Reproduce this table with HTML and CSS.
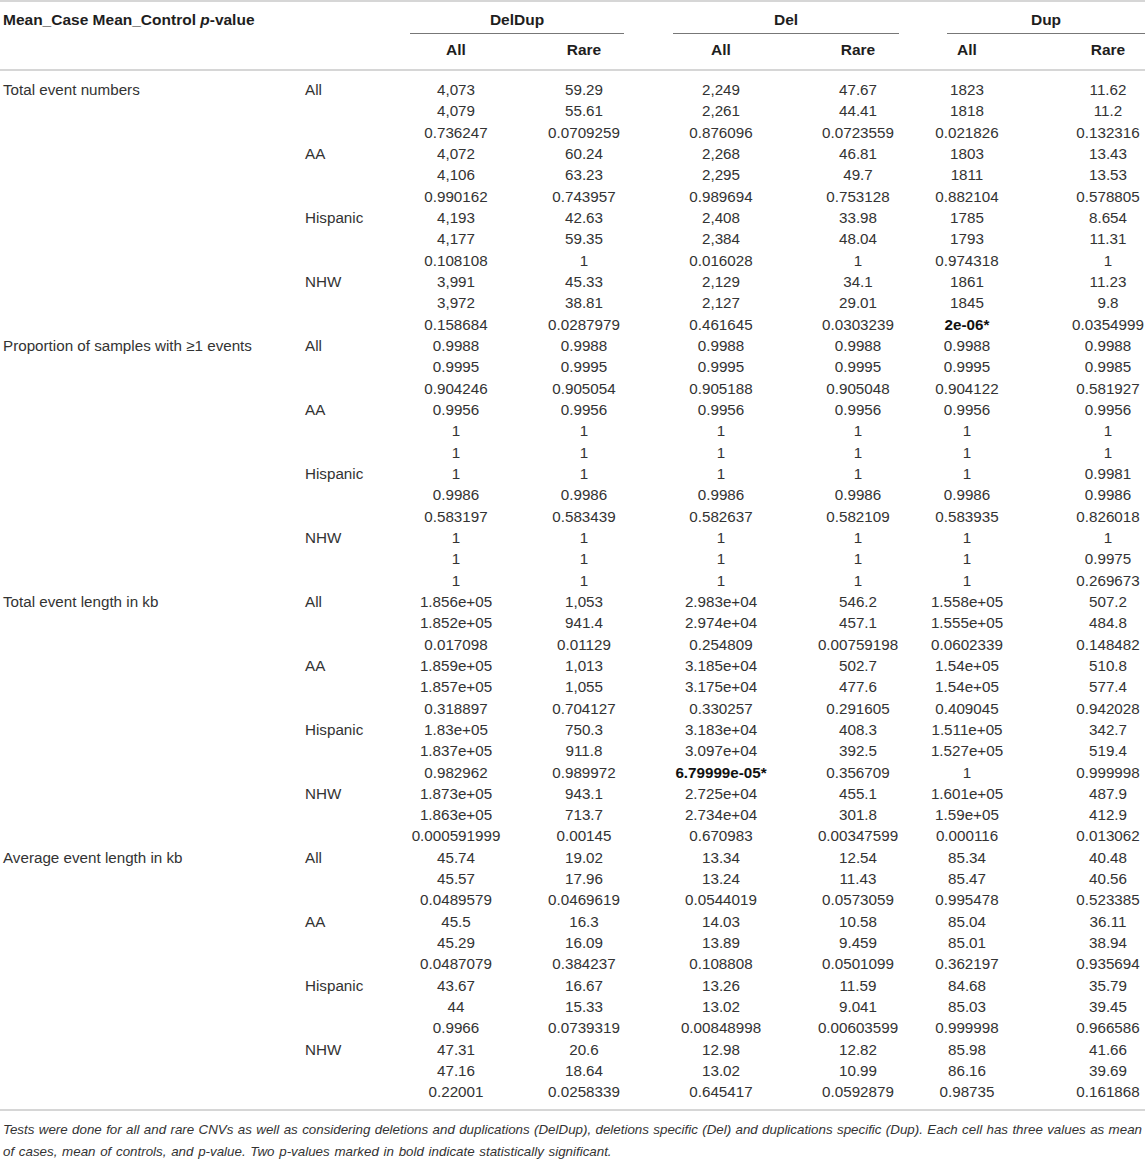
FILE: index.html
```html
<!DOCTYPE html>
<html lang="en">
<head>
  <meta charset="UTF-8" />
  <title>CNV burden table</title>
  <link rel="stylesheet" href="styles.css">
</head>
<body>
  <div class="wrap">
    <table class="cnv">
      <colgroup>
        <col class="c-label"><col class="c-pop">
        <col class="c-a"><col class="c-b"><col class="c-c"><col class="c-d"><col class="c-e"><col class="c-f">
      </colgroup>
      <thead>
        <tr class="top">
          <th colspan="2" rowspan="2" class="corner">Mean_Case Mean_Control <i>p</i>-value</th>
          <th colspan="2" class="grp g1"><div>DelDup</div></th>
          <th colspan="2" class="grp g2"><div>Del</div></th>
          <th colspan="2" class="grp g3"><div>Dup</div></th>
        </tr>
        <tr class="sub">
          <th>All</th><th>Rare</th><th>All</th><th>Rare</th><th>All</th><th class="end">Rare</th>
        </tr>
      </thead>
      <tbody>
        <tr class="first">
          <td class="lbl">Total event numbers</td><td class="pop">All</td>
          <td>4,073<br>4,079<br>0.736247</td><td>59.29<br>55.61<br>0.0709259</td>
          <td>2,249<br>2,261<br>0.876096</td><td>47.67<br>44.41<br>0.0723559</td>
          <td>1823<br>1818<br>0.021826</td><td>11.62<br>11.2<br>0.132316</td>
        </tr>
        <tr>
          <td class="lbl"></td><td class="pop">AA</td>
          <td>4,072<br>4,106<br>0.990162</td><td>60.24<br>63.23<br>0.743957</td>
          <td>2,268<br>2,295<br>0.989694</td><td>46.81<br>49.7<br>0.753128</td>
          <td>1803<br>1811<br>0.882104</td><td>13.43<br>13.53<br>0.578805</td>
        </tr>
        <tr>
          <td class="lbl"></td><td class="pop">Hispanic</td>
          <td>4,193<br>4,177<br>0.108108</td><td>42.63<br>59.35<br>1</td>
          <td>2,408<br>2,384<br>0.016028</td><td>33.98<br>48.04<br>1</td>
          <td>1785<br>1793<br>0.974318</td><td>8.654<br>11.31<br>1</td>
        </tr>
        <tr>
          <td class="lbl"></td><td class="pop">NHW</td>
          <td>3,991<br>3,972<br>0.158684</td><td>45.33<br>38.81<br>0.0287979</td>
          <td>2,129<br>2,127<br>0.461645</td><td>34.1<br>29.01<br>0.0303239</td>
          <td>1861<br>1845<br><b>2e-06*</b></td><td>11.23<br>9.8<br>0.0354999</td>
        </tr>

        <tr>
          <td class="lbl">Proportion of samples with ≥1 events</td><td class="pop">All</td>
          <td>0.9988<br>0.9995<br>0.904246</td><td>0.9988<br>0.9995<br>0.905054</td>
          <td>0.9988<br>0.9995<br>0.905188</td><td>0.9988<br>0.9995<br>0.905048</td>
          <td>0.9988<br>0.9995<br>0.904122</td><td>0.9988<br>0.9985<br>0.581927</td>
        </tr>
        <tr>
          <td class="lbl"></td><td class="pop">AA</td>
          <td>0.9956<br>1<br>1</td><td>0.9956<br>1<br>1</td>
          <td>0.9956<br>1<br>1</td><td>0.9956<br>1<br>1</td>
          <td>0.9956<br>1<br>1</td><td>0.9956<br>1<br>1</td>
        </tr>
        <tr>
          <td class="lbl"></td><td class="pop">Hispanic</td>
          <td>1<br>0.9986<br>0.583197</td><td>1<br>0.9986<br>0.583439</td>
          <td>1<br>0.9986<br>0.582637</td><td>1<br>0.9986<br>0.582109</td>
          <td>1<br>0.9986<br>0.583935</td><td>0.9981<br>0.9986<br>0.826018</td>
        </tr>
        <tr>
          <td class="lbl"></td><td class="pop">NHW</td>
          <td>1<br>1<br>1</td><td>1<br>1<br>1</td>
          <td>1<br>1<br>1</td><td>1<br>1<br>1</td>
          <td>1<br>1<br>1</td><td>1<br>0.9975<br>0.269673</td>
        </tr>

        <tr>
          <td class="lbl">Total event length in kb</td><td class="pop">All</td>
          <td>1.856e+05<br>1.852e+05<br>0.017098</td><td>1,053<br>941.4<br>0.01129</td>
          <td>2.983e+04<br>2.974e+04<br>0.254809</td><td>546.2<br>457.1<br>0.00759198</td>
          <td>1.558e+05<br>1.555e+05<br>0.0602339</td><td>507.2<br>484.8<br>0.148482</td>
        </tr>
        <tr>
          <td class="lbl"></td><td class="pop">AA</td>
          <td>1.859e+05<br>1.857e+05<br>0.318897</td><td>1,013<br>1,055<br>0.704127</td>
          <td>3.185e+04<br>3.175e+04<br>0.330257</td><td>502.7<br>477.6<br>0.291605</td>
          <td>1.54e+05<br>1.54e+05<br>0.409045</td><td>510.8<br>577.4<br>0.942028</td>
        </tr>
        <tr>
          <td class="lbl"></td><td class="pop">Hispanic</td>
          <td>1.83e+05<br>1.837e+05<br>0.982962</td><td>750.3<br>911.8<br>0.989972</td>
          <td>3.183e+04<br>3.097e+04<br><b>6.79999e-05*</b></td><td>408.3<br>392.5<br>0.356709</td>
          <td>1.511e+05<br>1.527e+05<br>1</td><td>342.7<br>519.4<br>0.999998</td>
        </tr>
        <tr>
          <td class="lbl"></td><td class="pop">NHW</td>
          <td>1.873e+05<br>1.863e+05<br>0.000591999</td><td>943.1<br>713.7<br>0.00145</td>
          <td>2.725e+04<br>2.734e+04<br>0.670983</td><td>455.1<br>301.8<br>0.00347599</td>
          <td>1.601e+05<br>1.59e+05<br>0.000116</td><td>487.9<br>412.9<br>0.013062</td>
        </tr>

        <tr>
          <td class="lbl">Average event length in kb</td><td class="pop">All</td>
          <td>45.74<br>45.57<br>0.0489579</td><td>19.02<br>17.96<br>0.0469619</td>
          <td>13.34<br>13.24<br>0.0544019</td><td>12.54<br>11.43<br>0.0573059</td>
          <td>85.34<br>85.47<br>0.995478</td><td>40.48<br>40.56<br>0.523385</td>
        </tr>
        <tr>
          <td class="lbl"></td><td class="pop">AA</td>
          <td>45.5<br>45.29<br>0.0487079</td><td>16.3<br>16.09<br>0.384237</td>
          <td>14.03<br>13.89<br>0.108808</td><td>10.58<br>9.459<br>0.0501099</td>
          <td>85.04<br>85.01<br>0.362197</td><td>36.11<br>38.94<br>0.935694</td>
        </tr>
        <tr>
          <td class="lbl"></td><td class="pop">Hispanic</td>
          <td>43.67<br>44<br>0.9966</td><td>16.67<br>15.33<br>0.0739319</td>
          <td>13.26<br>13.02<br>0.00848998</td><td>11.59<br>9.041<br>0.00603599</td>
          <td>84.68<br>85.03<br>0.999998</td><td>35.79<br>39.45<br>0.966586</td>
        </tr>
        <tr class="last">
          <td class="lbl"></td><td class="pop">NHW</td>
          <td>47.31<br>47.16<br>0.22001</td><td>20.6<br>18.64<br>0.0258339</td>
          <td>12.98<br>13.02<br>0.645417</td><td>12.82<br>10.99<br>0.0592879</td>
          <td>85.98<br>86.16<br>0.98735</td><td>41.66<br>39.69<br>0.161868</td>
        </tr>
      </tbody>
    </table>
    <p class="note"><span class="l1">Tests were done for all and rare CNVs as well as considering deletions and duplications (DelDup), deletions specific (Del) and duplications specific (Dup). Each cell has three values as mean</span> of cases, mean of controls, and p-value. Two p-values marked in bold indicate statistically significant.</p>
  </div>
</body>
</html>
```

FILE: styles.css
```css
body {
  margin: 0;
  background: #fff;
  font-family: 'Liberation Sans', Arial, sans-serif;
  color: #333;
}
.wrap {
  width: 1145px;
}
.cnv {
  width: 1145px;
  table-layout: fixed;
  border-collapse: separate;
  border-spacing: 0;
  font-size: 15.2px;
  border-top: 2px solid #d6d6d6;
  border-bottom: 2px solid #d6d6d6;
}
.c-label { width: 297px; }
.c-pop { width: 98px; }
.c-a { width: 122px; }
.c-b { width: 134px; }
.c-c { width: 140px; }
.c-d { width: 134px; }
.c-e { width: 84px; }
.c-f { width: 136px; }

.cnv th {
  font-size: 15.5px;
  font-weight: bold;
  color: #1e1e1e;
  line-height: 20px;
  padding: 0;
  text-align: center;
}
.cnv thead tr.top th {
  padding-top: 8px;
}
.cnv th.corner {
  text-align: left;
  vertical-align: top;
  padding-left: 3px;
  border-bottom: 2px solid #d6d6d6;
}
.cnv th.grp div {
  border-bottom: 1px solid #777;
  padding-bottom: 3px;
}
.cnv th.g1 div { margin-left: 15px; margin-right: 27px; }
.cnv th.g2 div { margin-left: 22px; margin-right: 26px; }
.cnv th.g3 div { margin-left: 22px; margin-right: 0; }
.cnv tr.sub th {
  padding: 6px 0 9px;
  border-bottom: 2px solid #d6d6d6;
}
.cnv tr.sub th.end {
  padding-left: 62px;
}

.cnv td {
  padding: 0;
  line-height: 21.33px;
  text-align: center;
  vertical-align: top;
  white-space: nowrap;
}
.cnv tr.first td { padding-top: 8px; }
.cnv tr.last td { padding-bottom: 6px; }
.cnv td.lbl {
  text-align: left;
  padding-left: 3px;
}
.cnv td.pop {
  text-align: left;
  padding-left: 8px;
}
.cnv td b {
  color: #111;
}
.cnv td:last-child {
  padding-left: 62px;
}

.note {
  margin: 8px 0 0;
  padding: 0 3px;
  font-size: 13.35px;
  font-style: italic;
  line-height: 22px;
  word-spacing: 1px;
  color: #333;
}
.note .l1 {
  display: block;
  text-align: justify;
  text-align-last: justify;
  word-spacing: 0;
}
```
